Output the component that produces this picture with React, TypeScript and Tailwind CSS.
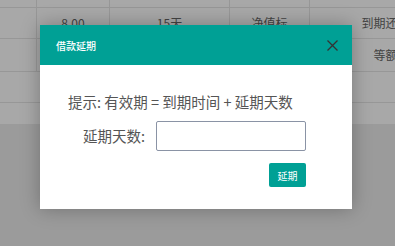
import React from "react";

const COLS = ["w-[37px]", "w-[73px]", "w-[120px]", "w-[80px]", "w-[176px]"];

function Row({ cells }: { cells: string[] }) {
  return (
    <div className="flex h-[31px] border-b border-[#e6e6e6] shrink-0">
      {cells.map((c, i) => (
        <div
          key={i}
          className={`${COLS[i]} shrink-0 flex items-center justify-center border-r border-[#e6e6e6] text-[12px] text-[#666] whitespace-nowrap`}
        >
          {c}
        </div>
      ))}
    </div>
  );
}

export default function App() {
  return (
    <div
      className="relative w-[395px] h-[246px] overflow-hidden bg-[#ececec]"
      style={{ fontFamily: '"Noto Sans CJK SC", "Noto Sans", sans-serif' }}
    >
      {/* page behind */}
      <div className="flex flex-col bg-white">
        <div className="flex h-[8px] border-b border-[#e6e6e6]">
          {COLS.map((w, i) => (
            <div key={i} className={`${w} shrink-0 border-r border-[#e6e6e6]`} />
          ))}
        </div>
        <Row cells={["", "8.00", "15天", "净值标", "到期还本付息"]} />
        <div className="flex h-[33px] border-b border-[#e6e6e6]">
          {COLS.map((w, i) => (
            <div
              key={i}
              className={`${w} shrink-0 flex items-center justify-center border-r border-[#e6e6e6] text-[12px] text-[#666] whitespace-nowrap`}
            >
              {i === 4 ? "等额本息" : ""}
            </div>
          ))}
        </div>
        <div className="h-[31px] border-b border-[#e6e6e6]" />
        <div className="h-[21px]" />
      </div>

      {/* shade */}
      <div className="absolute inset-0 bg-black/[0.34]" />

      {/* dialog */}
      <div className="absolute left-[40px] top-[25px] w-[312px] h-[184px] bg-white shadow-[0_0_18px_rgba(0,0,0,0.28)] flex flex-col">
        <div className="h-[40px] bg-[#00a095] flex items-center justify-between pl-[16px] pr-[14px]">
          <span className="text-[10px] text-white font-medium">借款延期</span>
          <svg width="11" height="11" viewBox="0 0 11 11" className="text-[#333]">
            <path d="M0.5 0.5 L10.5 10.5 M10.5 0.5 L0.5 10.5" stroke="currentColor" strokeWidth="1.3" />
          </svg>
        </div>
        <div className="flex flex-col pl-[28px] pr-[46px] pt-[27px]">
          <div className="text-[14.5px] leading-[20px] text-[#555] whitespace-nowrap">
            提示: 有效期 = 到期时间 + 延期天数
          </div>
          <div className="flex items-center mt-[9px]">
            <label className="w-[77px] text-right text-[14.5px] text-[#555] whitespace-nowrap">延期天数:</label>
            <input
              type="text"
              className="ml-[11px] w-[150px] h-[30px] border border-[#8a93a5] rounded-[2px] outline-none px-2 text-[13px]"
            />
          </div>
          <div className="flex justify-end mt-[12px]">
            <button className="w-[37px] h-[24px] bg-[#00a095] text-white text-[10px] rounded-[2px]">
              延期
            </button>
          </div>
        </div>
      </div>
    </div>
  );
}
